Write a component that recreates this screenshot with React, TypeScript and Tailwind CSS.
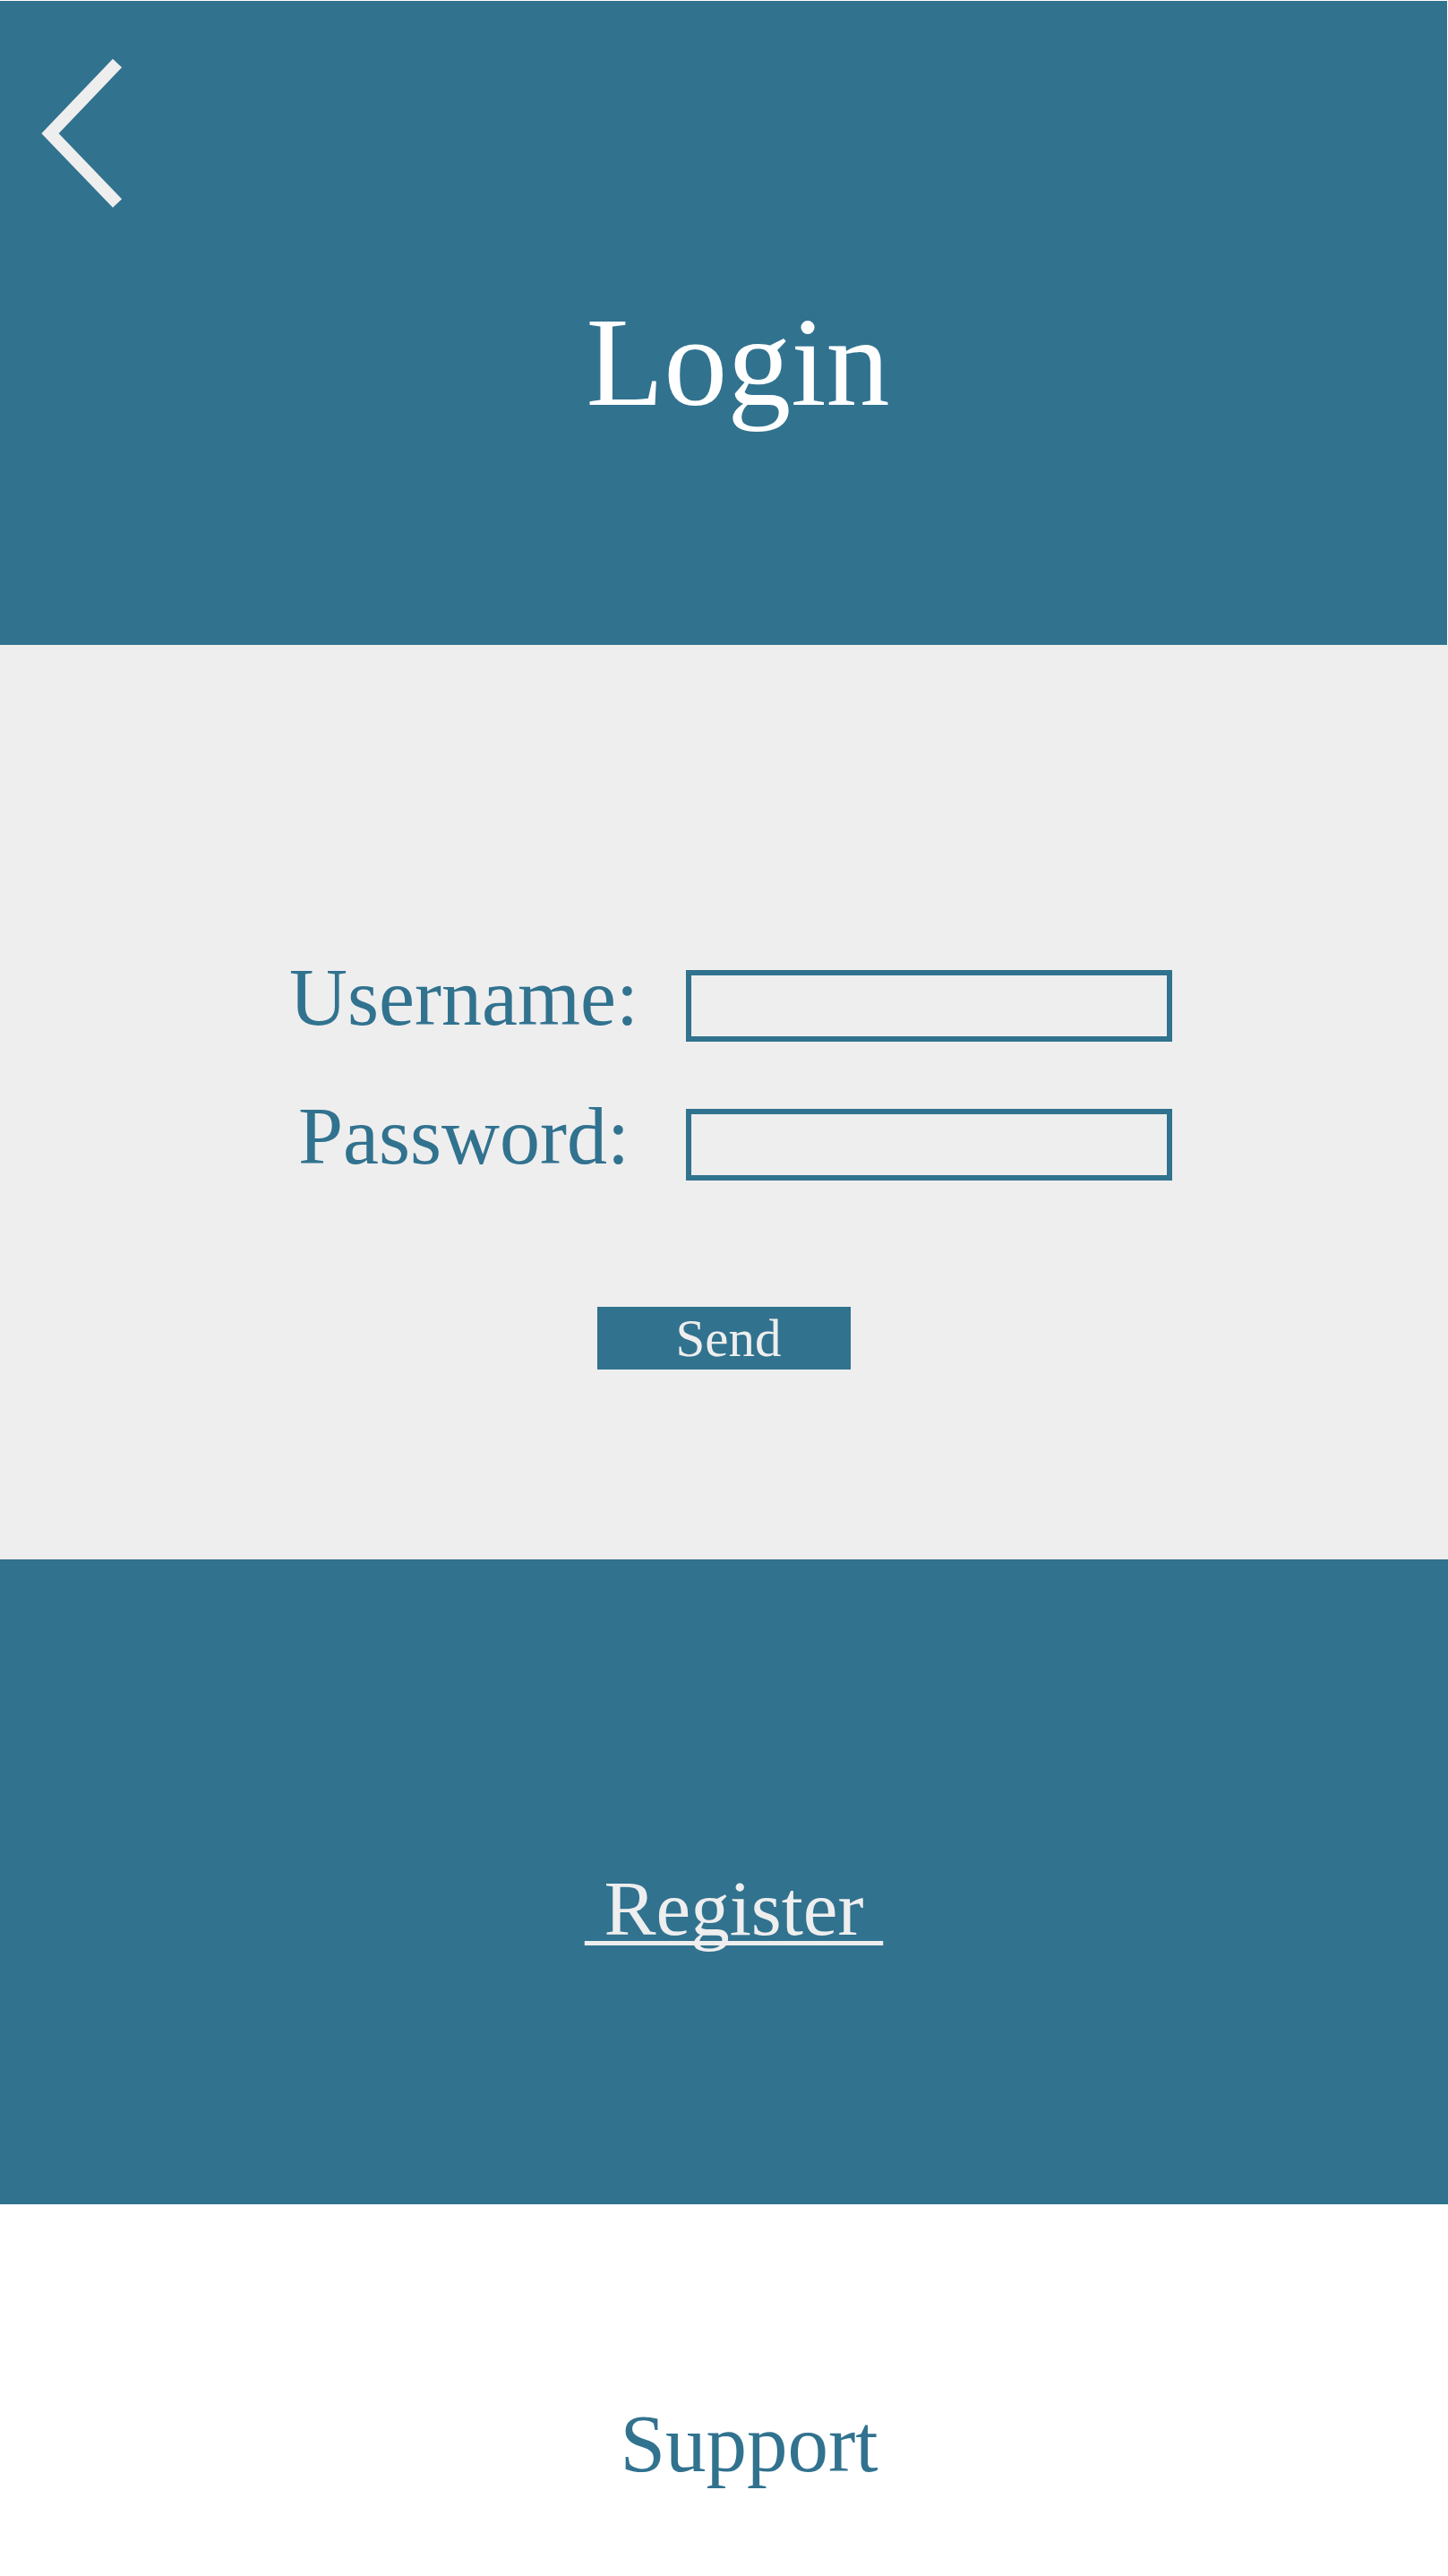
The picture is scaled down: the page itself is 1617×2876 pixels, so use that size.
import React from "react";

const serif = { fontFamily: '"Liberation Serif", "Times New Roman", serif' };

export default function App() {
  return (
    <div className="w-full h-[2876px] flex flex-col bg-white" style={serif}>
      {/* Header */}
      <div className="relative h-[720px] border-t border-r border-white bg-[#31728f] flex flex-col items-center">
        <svg
          className="absolute left-0 top-0"
          width="170"
          height="260"
          viewBox="0 0 170 260"
          fill="none"
        >
          <polyline
            points="131,69.5 56,148 131,226"
            stroke="#eeeeee"
            strokeWidth="14"
            strokeLinecap="butt"
            strokeLinejoin="miter"
          />
        </svg>
        <h1 className="pt-[332px] pl-[32px] text-[142px] leading-none text-white">Login</h1>
      </div>

      {/* Form */}
      <div className="h-[1021px] bg-[#eeeeee] flex flex-col items-center pt-[363px]">
        <div className="flex flex-col gap-[75px]">
          <div className="flex items-start gap-[38px]">
            <label className="w-[420px] text-center text-[90px] leading-none text-[#31728f] -mt-[14px]">
              Username:
            </label>
            <input
              type="text"
              className="w-[543px] h-[80px] border-[6px] border-[#31728f] bg-transparent outline-none"
            />
          </div>
          <div className="flex items-start gap-[38px]">
            <label className="w-[420px] text-center text-[90px] leading-none text-[#31728f] -mt-[14px]">
              Password:
            </label>
            <input
              type="password"
              className="w-[543px] h-[80px] border-[6px] border-[#31728f] bg-transparent outline-none"
            />
          </div>
        </div>
        <button className="mt-[141px] w-[283px] h-[70px] bg-[#31728f] flex items-center justify-center pl-[10px] text-[59px] leading-none text-[#eeeeee]">
          Send
        </button>
      </div>

      {/* Register */}
      <div className="h-[720px] bg-[#31728f] flex flex-col items-center pt-[346px]">
        <a className="pl-[22px] text-[87px] leading-none text-[#eeeeee] underline decoration-5 underline-offset-[7px] decoration-[#eeeeee] [text-decoration-skip-ink:none]">
          {"\u00a0Register\u00a0"}
        </a>
      </div>

      {/* Support */}
      <div className="flex-1 bg-white flex flex-col items-center pt-[222px]">
        <a className="pl-[56px] text-[91px] leading-none text-[#31728f]">Support</a>
      </div>
    </div>
  );
}
